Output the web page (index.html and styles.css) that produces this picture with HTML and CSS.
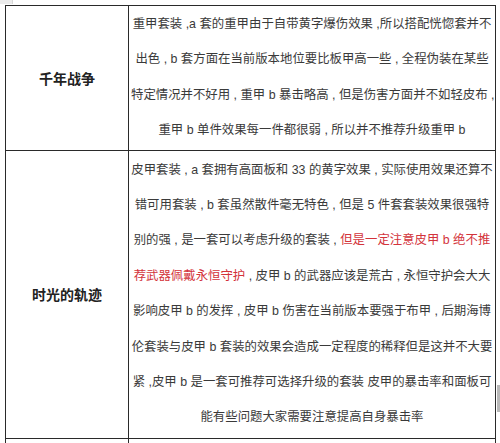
FILE: index.html
```html
<!DOCTYPE html>
<html lang="zh-CN">
<head>
<meta charset="utf-8">
<title>套装推荐</title>
<link rel="stylesheet" href="styles.css">
</head>
<body>
<div class="corner-mark"></div>
<div class="side-handle"></div>
<table class="sets">
  <colgroup>
    <col class="col-name">
    <col class="col-desc">
  </colgroup>
  <tr class="row-a">
    <td class="name">千年战争</td>
    <td class="desc">
      <span class="ln">重甲套装 ,a 套的重甲由于自带黄字爆伤效果 ,所以搭配恍惚套并不</span>
      <span class="ln">出色 , b 套方面在当前版本地位要比板甲高一些 , 全程伪装在某些</span>
      <span class="ln">特定情况并不好用 , 重甲 b 暴击略高 , 但是伤害方面并不如轻皮布 ,</span>
      <span class="ln">重甲 b 单件效果每一件都很弱 , 所以并不推荐升级重甲 b</span>
    </td>
  </tr>
  <tr class="row-b">
    <td class="name">时光的轨迹</td>
    <td class="desc">
      <span class="ln">皮甲套装 , a 套拥有高面板和 33 的黄字效果 , 实际使用效果还算不</span>
      <span class="ln">错可用套装 , b 套虽然散件毫无特色 , 但是 5 件套套装效果很强特</span>
      <span class="ln">别的强 , 是一套可以考虑升级的套装 , <span class="warn">但是一定注意皮甲 b 绝不推</span></span>
      <span class="ln"><span class="warn">荐武器佩戴永恒守护</span> , 皮甲 b 的武器应该是荒古 , 永恒守护会大大</span>
      <span class="ln">影响皮甲 b 的发挥 , 皮甲 b 伤害在当前版本要强于布甲 , 后期海博</span>
      <span class="ln">伦套装与皮甲 b 套装的效果会造成一定程度的稀释但是这并不大要</span>
      <span class="ln">紧 ,皮甲 b 是一套可推荐可选择升级的套装 皮甲的暴击率和面板可</span>
      <span class="ln">能有些问题大家需要注意提高自身暴击率</span>
    </td>
  </tr>
  <tr class="row-c">
    <td class="name"></td>
    <td class="desc"></td>
  </tr>
</table>
</body>
</html>
```
FILE: styles.css
```css
html, body {
  margin: 0;
  padding: 0;
  background: #ffffff;
  overflow: hidden;
}

body {
  width: 500px;
  height: 443px;
  position: relative;
  font-family: "Liberation Sans", "Noto Sans CJK SC", sans-serif;
  color: #3a3a3a;
}

.corner-mark {
  position: absolute;
  left: 0;
  top: 0;
  width: 12px;
  height: 4px;
  background: #ececec;
  border-right: 1px solid #d8d8d8;
}

.side-handle {
  position: absolute;
  left: 497px;
  top: 385px;
  width: 3px;
  height: 27px;
  background: #b9b9b9;
}

.sets {
  border-collapse: collapse;
  margin: 5px 0 0 5px;
  width: 490px;
  table-layout: fixed;
}

.col-name {
  width: 123px;
}

.col-desc {
  width: 367px;
}

.sets td {
  border: 1px solid #2a2a2a;
  vertical-align: middle;
  text-align: center;
  padding: 2px 2px;
}

.row-a td {
  padding-top: 1px;
  padding-bottom: 1px;
}

.name {
  font-size: 14px;
  font-weight: bold;
  color: #222;
}

.desc {
  font-size: 12.4px;
  line-height: 35.4px;
}

.ln {
  display: block;
  white-space: nowrap;
}

.warn {
  color: #d3333b;
}

.row-c td {
  height: 30px;
}
```
